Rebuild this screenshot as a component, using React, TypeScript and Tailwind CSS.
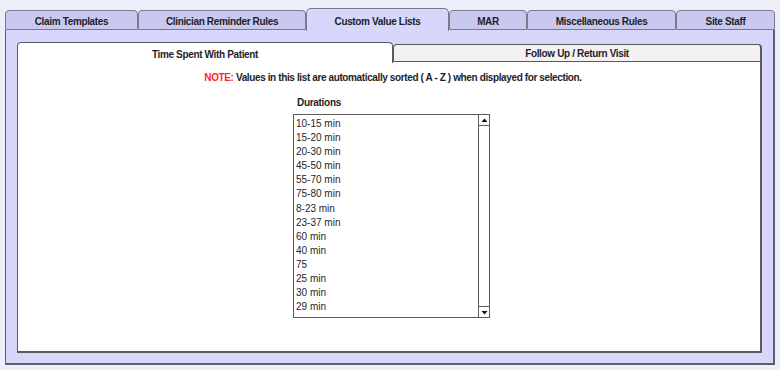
import React from "react";

const outerTabs = [
  { label: "Claim Templates", w: 133 },
  { label: "Clinician Reminder Rules", w: 168 },
  { label: "Custom Value Lists", w: 143, active: true },
  { label: "MAR", w: 78 },
  { label: "Miscellaneous Rules", w: 149 },
  { label: "Site Staff", w: 0 },
];

const items = [
  "10-15 min",
  "15-20 min",
  "20-30 min",
  "45-50 min",
  "55-70 min",
  "75-80 min",
  "8-23 min",
  "23-37 min",
  "60 min",
  "40 min",
  "75",
  "25 min",
  "30 min",
  "29 min",
];

export default function App() {
  return (
    <div
      className="w-[780px] h-[370px] bg-[#eeeefb] pt-[8px] px-[5px] text-[#1e1e2a]"
      style={{ fontFamily: '"Liberation Sans", Arial, sans-serif' }}
    >
      <div className="flex items-end h-[22px] w-[770px]">
        {outerTabs.map((t) =>
          t.active ? (
            <div
              key={t.label}
              className="h-[23px] -mb-px relative z-10 bg-[#d7d7fc] border border-b-0 border-[#7a7a8c] rounded-t-[5px] flex items-center justify-center text-[10px] tracking-[-0.35px] font-bold pt-[3px]"
              style={{ width: t.w }}
            >
              {t.label}
            </div>
          ) : (
            <div
              key={t.label}
              className={`h-[20px] bg-[#c9c9f0] border border-[#7a7a8c] rounded-t-[4px] flex items-center justify-center text-[10px] tracking-[-0.35px] font-bold pt-[3px] ${
                t.w === 0 ? "flex-1" : ""
              }`}
              style={t.w ? { width: t.w } : undefined}
            >
              {t.label}
            </div>
          )
        )}
      </div>
      <div className="w-[770px] h-[335px] bg-[#d7d7fc] border border-t-0 border-[#5f5f6a] border-r-2 border-b-2 px-[11px] pt-[12px]">
        <div className="flex items-end h-[20px]">
          <div className="w-[376px] h-[21px] -mb-px relative z-10 bg-white border border-b-0 border-[#5a5a5a] rounded-t-[4px] flex items-center justify-center text-[10px] tracking-[-0.35px] font-bold pt-[2px]">
            Time Spent With Patient
          </div>
          <div className="flex-1 h-[18px] bg-[#f3f1f1] border border-[#5a5a5a] border-r-2 rounded-t-[4px] flex items-center justify-center text-[10px] tracking-[-0.35px] font-bold pt-px">
            Follow Up / Return Visit
          </div>
        </div>
        <div className="h-[291px] bg-white border border-t-0 border-[#5a5a5a] border-r-2 border-b-2 flex flex-col items-center pt-[9px]">
          <div className="text-[10px] tracking-[-0.38px] font-bold leading-[14px] ml-[8px]">
            <span className="text-[#ff2a2a]">NOTE:</span> Values in this list are
            automatically sorted ( A - Z ) when displayed for selection.
          </div>
          <div className="mt-[11px] ml-[5px] flex flex-col">
            <div className="text-[10px] tracking-[-0.3px] font-bold leading-[14px] pl-[4px]">Durations</div>
            <div className="mt-[4px] w-[197px] h-[204px] border border-[#5a5a5a] flex">
              <div className="flex-1 pl-[2px] pt-[2px]">
                {items.map((it) => (
                  <div key={it} className="text-[10px] leading-[14.1px] text-[#262626]">
                    {it}
                  </div>
                ))}
              </div>
              <div className="w-[11px] border-l border-[#5a5a5a] flex flex-col justify-between">
                <div className="h-[11px] border-b border-[#5a5a5a] flex items-center justify-center">
                  <svg width="7" height="5" viewBox="0 0 7 5">
                    <path d="M3.5 0.5 L6.5 4 L0.5 4 Z" fill="#111" />
                  </svg>
                </div>
                <div className="h-[11px] border-t border-[#5a5a5a] flex items-center justify-center">
                  <svg width="7" height="5" viewBox="0 0 7 5">
                    <path d="M0.5 1 L6.5 1 L3.5 4.5 Z" fill="#111" />
                  </svg>
                </div>
              </div>
            </div>
          </div>
        </div>
      </div>
    </div>
  );
}
